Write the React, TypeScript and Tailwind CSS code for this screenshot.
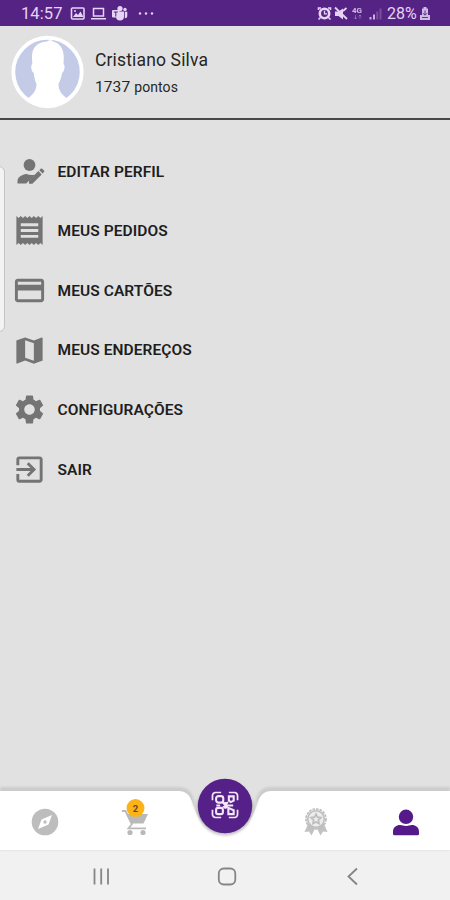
import type { ReactNode } from "react";
import { MdReceipt, MdCreditCard, MdMap, MdSettings, MdExitToApp } from "react-icons/md";

function StatusBar() {
  return (
    <header className="flex h-[26px] items-center bg-[#552384] pl-[21px] text-[#e6d3f5]">
      <span className="mt-[2px] w-[49px] text-[16.5px] leading-none tracking-[0.1px]">14:57</span>
      <svg width="86" height="20" viewBox="70 3 86 20" fill="none" stroke="currentColor">
        <rect x="71.5" y="8" width="12.5" height="11" rx="1" strokeWidth="1.6" />
        <path d="M73 17l3-4 2 2 2.500-3.500 3 5.500z" fill="currentColor" stroke="none" />
        <circle cx="75" cy="11" r="1" fill="currentColor" stroke="none" />
        <path d="M93.500 8.500h10v7.500h-10zM91 18.700h15" strokeWidth="1.5" />
        <g fill="currentColor" stroke="none">
          <circle cx="120" cy="8.500" r="2.600" />
          <circle cx="125" cy="9.500" r="1.700" />
          <path d="M116 11.500h8v5a4 4 0 0 1-8 0zM124.800 11.800h2.500v4a2.500 2.500 0 0 1-2.500 2.500z" />
          <rect x="112" y="10" width="7.500" height="7.500" rx="1" />
        </g>
        <path d="M113.800 12h4M115.800 12v4.500" stroke="#552384" strokeWidth="1" />
        <g fill="currentColor" stroke="none">
          <circle cx="140" cy="13.500" r="1.200" />
          <circle cx="146" cy="13.500" r="1.200" />
          <circle cx="152" cy="13.500" r="1.200" />
        </g>
      </svg>
      <svg width="66" height="20" viewBox="317 3 66 20" className="ml-[161px]" fill="none" stroke="currentColor">
        <circle cx="324.500" cy="13.500" r="4.700" strokeWidth="2.600" />
        <path d="M324.500 10.800v3h2.500" strokeWidth="1.300" />
        <path d="M318.500 10v-2h2.500M328 8h2.500v2M320.500 17.500l-2 2M328.500 17.500l2 2" strokeWidth="1.600" />
        <path d="M335 11.500h3.500l4.500-3v11l-4.500-3.500h-3.500z" fill="currentColor" stroke="none" />
        <path d="M335 7.500l12 11.500M343 11l3.500-3" strokeWidth="1.800" />
        <text x="352" y="12.500" fill="currentColor" stroke="none" fontSize="8" fontWeight="700" opacity=".85">4G</text>
        <path d="M355.500 15v4M354 17.500l1.500 1.500 1.500-1.500M360 19v-4M358.500 16.500l1.500-1.500 1.500 1.500" opacity=".35" />
        <path d="M370.500 17v2.500M374 14.500v5" strokeWidth="2" opacity=".8" />
        <path d="M377.300 11.500v8M380.500 8.500v11" strokeWidth="2" opacity=".25" />
      </svg>
      <span className="mt-[2px] ml-[4px] w-[33px] text-[16px] leading-none tracking-[0px]">28%</span>
      <svg width="10" height="13" viewBox="0 0 10 13" className="mt-px">
        <path d="M3.500 0h3v1.500H8V8h2v5H0V8h2V1.500h1.500z" fill="currentColor" opacity=".85" />
        <path d="M5 3.500V8M3 6.200l2 2 2-2M2 10.500h6" fill="none" stroke="#552384" strokeWidth=".9" />
      </svg>
    </header>
  );
}

function Avatar() {
  return (
    <svg width="74" height="74" viewBox="0 0 74 74">
      <circle cx="37.500" cy="37" r="34.500" fill="#c3cbe6" />
      <path
        d="M41 5c-2 .3-3 .8-4 1.500C27 7 21.500 13 22 23l.3 6c-2 1-1 8 1.500 9 .7 5 1.200 8 2.700 11 0 7-4 11-9.500 15 13 10 27 10 41 0-6-4-9.500-8-9.500-15 1.500-3 2.800-6 3.500-11 2.500-1 3.500-8 1.500-9l.3-6C54 13 49 8 43 6.500z"
        fill="#fff"
      />
      <circle cx="37.500" cy="37" r="34.200" fill="none" stroke="#fff" strokeWidth="3.900" />
    </svg>
  );
}

function Profile() {
  return (
    <section className="flex h-[94px] border-b-2 border-[#484848] pt-[9px] pl-[10px]">
      <Avatar />
      <div className="ml-[11px] pt-[15px] text-[#262626]">
        <p className="text-[17.5px] leading-[20px] tracking-[0.15px]">Cristiano Silva</p>
        <p className="mt-[8px] text-[15.5px] leading-[18px] tracking-[0.1px]">
          1737 <span className="text-[14px]">pontos</span>
        </p>
      </div>
    </section>
  );
}

function UserPencil() {
  return (
    <svg width="35" height="35" viewBox="0 0 35 35" fill="currentColor">
      <circle cx="17.500" cy="11" r="5.900" />
      <path d="M5.500 29.500v-2.200c0-4.500 4.500-6.500 9-7.300 2.500 1 5 1.200 8.500.7l-8.800 8.800z" />
      <path d="M17 29.700v-3.300l9.400-9.300 3.300 3.300-9.300 9.300zM27.300 16.200l1.400-1.400c.5-.5 1-.5 1.500 0l1.800 1.800c.5.500.5 1 0 1.500l-1.400 1.400z" />
    </svg>
  );
}

const items: { label: string; icon: ReactNode }[] = [
  { label: "EDITAR PERFIL", icon: <UserPencil /> },
  { label: "MEUS PEDIDOS", icon: <MdReceipt size={35} /> },
  { label: "MEUS CARTÕES", icon: <MdCreditCard size={35} /> },
  { label: "MEUS ENDEREÇOS", icon: <MdMap size={35} /> },
  { label: "CONFIGURAÇÕES", icon: <MdSettings size={35} /> },
  { label: "SAIR", icon: <MdExitToApp size={35} /> },
];

function Menu() {
  return (
    <nav className="relative h-[668px] pt-[21.500px]">
      <div className="absolute top-[46px] -left-2 h-[166px] w-[13px] rounded-[6px] border border-[#c4c4c4] bg-[#f3f3f3]" />
      {items.map((item) => (
        <a key={item.label} className="flex h-[59.6px] items-center pl-[11.5px] text-[#747474]">
          {item.icon}
          <span className="mt-[2px] ml-[11px] text-[15.5px] font-semibold tracking-[0.08px] text-[#1e1e1e]">{item.label}</span>
        </a>
      ))}
    </nav>
  );
}

function QrGlyph() {
  return (
    <svg x="211" y="17.500" width="28" height="27" viewBox="0 0 28 28" fill="none" stroke="#f3e6fa" strokeWidth="1.800">
      <path d="M1 9V4.500A3.500 3.500 0 0 1 4.500 1H10M18 1h5.500A3.500 3.500 0 0 1 27 4.500V9M27 19v4.500a3.500 3.500 0 0 1-3.500 3.500H18M10 27H4.500A3.500 3.500 0 0 1 1 23.500V19" />
      <g strokeWidth="2.200">
        <rect x="4.800" y="4.800" width="7.400" height="6.700" rx="2.500" />
        <path d="M18 5h5v4.500l-3 1.500-2-1.500z" />
        <rect x="4.800" y="17" width="7" height="6.500" rx="2" />
        <path d="M17.500 17l5.500 2.500v4h-5.500z" />
        <path d="M11.500 11l5 6M17 11l-5 5.500M15 14.500h7.500M5 14.500h4M14.300 11v7" />
      </g>
    </svg>
  );
}

function BottomBar() {
  return (
    <footer className="flex h-[62px] items-end">
      <svg width="450" height="76" viewBox="0 0 450 76" className="shrink-0 overflow-visible" fontFamily="Roboto, sans-serif">
        <defs>
          <filter id="shade" x="-5%" y="-20%" width="110%" height="140%">
            <feGaussianBlur stdDeviation="1.200" />
          </filter>
        </defs>
        <path d="M0 13H177c13 0 15 6 18 16 5 14 15 24 30 24s25-10 30-24c3-10 5-16 18-16H450V76H0z" fill="#aaa" opacity=".38" filter="url(#shade)" />
        <path d="M0 17H177c12 0 13 6 17 15.500 5 15 15 26 31 26s26-11 31-26c4-9.500 5-15.500 17-15.500H450V76H0z" fill="#fff" />
        <path d="M192 27c6 20 16 32 33 32s27-12 33-32z" fill="#d6d6d6" filter="url(#shade)" />
        <circle cx="225" cy="34" r="28" fill="#777" opacity=".35" filter="url(#shade)" />
        <circle cx="225" cy="32" r="27.200" fill="#552087" />
        <QrGlyph />
        <circle cx="45" cy="48" r="13.300" fill="#bdbdbd" />
        <path d="M52 41l-3.500 9.500-10.500 4.500 3.500-9.500z" fill="#fff" />
        <circle cx="45" cy="48" r="1.700" fill="#bdbdbd" />
        <g fill="none" stroke="#b9b9b9" strokeWidth="1.800">
          <path d="M122 37h3.500l6.500 13-3.500 4.300h17.500" />
          <path d="M126 40h22l-4.500 9.500h-13z" fill="#b9b9b9" stroke="none" />
          <circle cx="130" cy="58.500" r="2.600" fill="#b9b9b9" stroke="none" />
          <circle cx="143" cy="58.500" r="2.600" fill="#b9b9b9" stroke="none" />
        </g>
        <circle cx="135.500" cy="34" r="9" fill="#fcb316" />
        <text x="135.500" y="37.500" textAnchor="middle" fontSize="9.500" fontWeight="700" fill="#713f38">2</text>
        <path d="M308 50l-3.500 8 4.500-.5 2.500 4 4-8h1l4 8 2.500-4 4.500.5-3.500-8z" fill="#c2c2c2" />
        <circle cx="316" cy="45" r="9" fill="#ececec" />
        <g fill="none" stroke="#bdbdbd" strokeWidth="1.700">
          <circle cx="316" cy="45" r="10" strokeDasharray="2.600 1" />
          <circle cx="316" cy="45" r="8.300" strokeWidth="1.500" />
          <path d="M316 40.200l1.500 3 3.400.5-2.500 2.400.6 3.400-3-1.600-3 1.600.6-3.400-2.500-2.400 3.400-.5z" />
        </g>
        <g fill="#56198a">
          <circle cx="406" cy="42.800" r="7.200" />
          <path d="M393 60v-2.300c0-4.500 3.500-6.700 7-6.700 2.500 0 3.500 1 6 1s3.500-1 6-1c3.500 0 7 2.200 7 6.700V60c0 .8-.5 1.200-1.200 1.200h-23.600c-.7 0-1.200-.4-1.200-1.200z" />
        </g>
      </svg>
    </footer>
  );
}

function SystemNav() {
  return (
    <div className="flex h-[50px] justify-center bg-[#f1f1f1] pt-[17px] text-[#858585]">
      <svg width="266" height="20" viewBox="92 17 266 20" fill="none" stroke="currentColor" strokeWidth="1.800">
        <path d="M94.500 18.500v16M101.200 18.500v16M108 18.500v16" />
        <rect x="218.800" y="18.500" width="16.500" height="16" rx="5" />
        <path d="M357 18.500l-8.500 8 8.500 8" />
      </svg>
    </div>
  );
}

export default function App() {
  return (
    <main className="h-[900px] w-[450px] overflow-hidden bg-[#e1e1e1] font-['Roboto','Noto_Sans',sans-serif]">
      <StatusBar />
      <Profile />
      <Menu />
      <BottomBar />
      <SystemNav />
    </main>
  );
}
